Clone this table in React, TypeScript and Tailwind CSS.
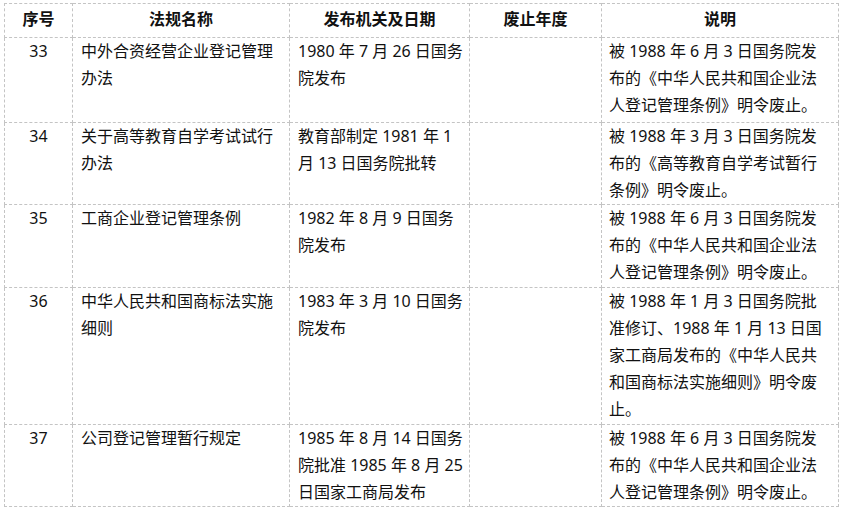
import React from "react";

type Row = {
  no: string;
  name: string[];
  org: string[];
  year: string[];
  note: string[];
  h: string;
};

const rows: Row[] = [
  {
    no: "33",
    name: ["中外合资经营企业登记管理", "办法"],
    org: ["1980 年 7 月 26 日国务", "院发布"],
    year: [],
    note: ["被 1988 年 6 月 3 日国务院发", "布的《中华人民共和国企业法", "人登记管理条例》明令废止。"],
    h: "h-[85px]",
  },
  {
    no: "34",
    name: ["关于高等教育自学考试试行", "办法"],
    org: ["教育部制定 1981 年 1", "月 13 日国务院批转"],
    year: [],
    note: ["被 1988 年 3 月 3 日国务院发", "布的《高等教育自学考试暂行", "条例》明令废止。"],
    h: "h-[82px]",
  },
  {
    no: "35",
    name: ["工商企业登记管理条例"],
    org: ["1982 年 8 月 9 日国务", "院发布"],
    year: [],
    note: ["被 1988 年 6 月 3 日国务院发", "布的《中华人民共和国企业法", "人登记管理条例》明令废止。"],
    h: "h-[83px]",
  },
  {
    no: "36",
    name: ["中华人民共和国商标法实施", "细则"],
    org: ["1983 年 3 月 10 日国务", "院发布"],
    year: [],
    note: [
      "被 1988 年 1 月 3 日国务院批",
      "准修订、1988 年 1 月 13 日国",
      "家工商局发布的《中华人民共",
      "和国商标法实施细则》明令废",
      "止。",
    ],
    h: "h-[137px]",
  },
  {
    no: "37",
    name: ["公司登记管理暂行规定"],
    org: ["1985 年 8 月 14 日国务", "院批准 1985 年 8 月 25", "日国家工商局发布"],
    year: [],
    note: ["被 1988 年 6 月 3 日国务院发", "布的《中华人民共和国企业法", "人登记管理条例》明令废止。"],
    h: "h-[82px]",
  },
];

function Lines({ lines }: { lines: string[] }) {
  return (
    <>
      {lines.map((l, i) => (
        <div key={i} className="whitespace-nowrap">
          {l}
        </div>
      ))}
    </>
  );
}

const cell =
  "border border-dashed border-[#c4c4c4] align-top p-0 leading-[27px]";

export default function App() {
  return (
    <div
      className="bg-white w-[844px] h-[512px] pt-[3px] pl-[4px] text-[16px] text-[#111]"
      style={{ fontFamily: '"Noto Sans", "Noto Sans CJK SC", sans-serif' }}
    >
      <table className="table-fixed border-collapse w-[834px]">
        <colgroup>
          <col className="w-[68px]" />
          <col className="w-[217px]" />
          <col className="w-[180px]" />
          <col className="w-[132px]" />
          <col className="w-[237px]" />
        </colgroup>
        <thead>
          <tr className="h-[34px]">
            {["序号", "法规名称", "发布机关及日期", "废止年度", "说明"].map((t) => (
              <th
                key={t}
                className="border border-dashed border-[#c4c4c4] p-0 pb-[3px] align-middle text-center font-bold leading-[27px]"
              >
                {t}
              </th>
            ))}
          </tr>
        </thead>
        <tbody>
          {rows.map((r) => (
            <tr key={r.no} className={r.h}>
              <td className={`${cell} text-center`}>{r.no}</td>
              <td className={`${cell} pl-[8px]`}>
                <Lines lines={r.name} />
              </td>
              <td className={`${cell} pl-[8px]`}>
                <Lines lines={r.org} />
              </td>
              <td className={cell}>
                <Lines lines={r.year} />
              </td>
              <td className={`${cell} pl-[7px]`}>
                <Lines lines={r.note} />
              </td>
            </tr>
          ))}
        </tbody>
      </table>
    </div>
  );
}
